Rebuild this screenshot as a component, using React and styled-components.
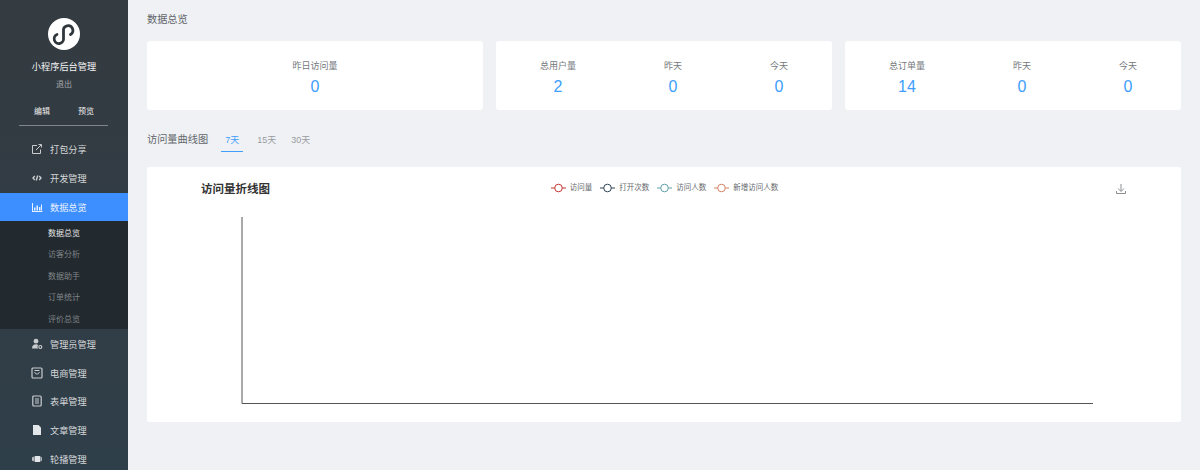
import React from 'react';
import styled, { createGlobalStyle } from 'styled-components';

const GlobalStyle = createGlobalStyle`
  html, body {
    margin: 0;
    padding: 0;
    height: 100%;
    overflow: hidden;
    background: #eff1f5;
    font-family: "Liberation Sans", "Noto Sans CJK SC", sans-serif;
  }
`;

const Page = styled.div`
  display: flex;
  width: 1200px;
  height: 470px;
  overflow: hidden;
`;

const Sidebar = styled.aside`
  flex: 0 0 128px;
  height: 470px;
  overflow: hidden;
  background: linear-gradient(180deg, #343b41 0%, #323c44 50%, #2f3f4a 100%);
  color: #fff;
`;

const Brand = styled.div`
  display: flex;
  flex-direction: column;
  align-items: center;
  padding-top: 18px;
`;

const Logo = styled.div`
  width: 32px;
  height: 32px;
  border-radius: 50%;
  background: #fff;
  display: flex;
  align-items: center;
  justify-content: center;
`;

const AppName = styled.div`
  margin-top: 10px;
  font-size: 9.2px;
  line-height: 14px;
  color: #f2f3f4;
`;

const Logout = styled.div`
  margin-top: 5px;
  font-size: 8px;
  line-height: 12px;
  color: #a5a9ad;
`;

const BrandActions = styled.div`
  display: flex;
  justify-content: space-between;
  width: 89px;
  box-sizing: border-box;
  padding: 0 14px 7px 15px;
  margin: 15px 1px 0 0;
  border-bottom: 1px solid #82868a;
  font-size: 8px;
  line-height: 12px;
  color: #eceded;
`;

const Menu = styled.nav`
  margin-top: 9px;
`;

const MenuItem = styled.div`
  display: flex;
  align-items: center;
  height: 28.8px;
  padding-left: 31px;
  box-sizing: border-box;
  font-size: 9.2px;
  color: ${p => (p.$active ? '#e8f1ff' : '#d4d6d8')};
  background: ${p => (p.$active ? '#3d8efe' : 'transparent')};
`;

const IconSlot = styled.span`
  flex: 0 0 19px;
  display: flex;
  align-items: center;
  color: ${p => (p.$active ? '#e8f1ff' : '#c9ccce')};
`;

const SubMenu = styled.div`
  background: #232a2f;
  height: 108px;
`;

const SubItem = styled.div`
  display: flex;
  align-items: center;
  height: 21.6px;
  padding-left: 48px;
  font-size: 8px;
  color: ${p => (p.$active ? '#e4e5e6' : '#7f8588')};
`;

const Main = styled.main`
  flex: 1;
  padding: 12px 19px 0;
  min-width: 0;
`;

const PageTitle = styled.div`
  font-size: 10.2px;
  line-height: 15px;
  color: #62666a;
`;

const StatRow = styled.div`
  display: grid;
  grid-template-columns: repeat(3, 336px);
  column-gap: 13px;
  margin-top: 14px;
`;

const StatCard = styled.div`
  height: 69px;
  background: #fff;
  border-radius: 3px;
  display: flex;
  align-items: center;
  justify-content: space-around;
`;

const Stat = styled.div`
  display: flex;
  flex-direction: column;
  align-items: center;
  padding-top: 4px;
`;

const StatLabel = styled.div`
  font-size: 9px;
  line-height: 13px;
  color: #74787c;
`;

const StatValue = styled.div`
  margin-top: 5px;
  font-size: 16px;
  line-height: 17px;
  color: #409eff;
`;

const TabBar = styled.div`
  display: flex;
  align-items: flex-end;
  height: 42px;
`;

const TabTitle = styled.div`
  height: 22px;
  line-height: 20px;
  font-size: 10.2px;
  color: #62666a;
  margin-right: 13px;
`;

const Tab = styled.div`
  height: 22px;
  line-height: 20px;
  padding: 0 ${p => (p.$active ? '4px' : '5px')};
  margin-right: ${p => (p.$active ? '9px' : '5px')};
  font-size: 9px;
  box-sizing: border-box;
  color: ${p => (p.$active ? '#409eff' : '#999c9f')};
  border-bottom: 1px solid ${p => (p.$active ? '#409eff' : 'transparent')};
`;

const ChartCard = styled.section`
  margin-top: 15px;
  height: 255px;
  background: #fff;
  border-radius: 2px;
  display: flex;
  flex-direction: column;
`;

const ChartHead = styled.div`
  position: relative;
  display: flex;
  align-items: center;
  justify-content: center;
  height: 42px;
`;

const ChartTitle = styled.div`
  position: absolute;
  left: 54px;
  top: 14px;
  font-size: 11.5px;
  line-height: 16px;
  font-weight: 700;
  color: #333;
`;

const Legend = styled.div`
  display: flex;
  gap: 8px;
  margin-top: -1px;
  margin-left: 1px;
  font-size: 7.5px;
  line-height: 12px;
  color: #666a6e;
`;

const LegendEntry = styled.div`
  display: flex;
  align-items: center;
  gap: 4px;
`;

const DownloadBtn = styled.div`
  position: absolute;
  right: 54px;
  top: 14px;
  width: 12px;
  height: 12px;
  color: #8a8d90;
`;

const Plot = styled.div`
  flex: 1;
  padding: 8px 0 0 94px;
`;

const nav = [
  ['打包分享', 'share'],
  ['开发管理', 'code'],
  ['数据总览', 'chart', true],
];

const navAfter = [
  ['管理员管理', 'admin'],
  ['电商管理', 'shop'],
  ['表单管理', 'form'],
  ['文章管理', 'doc'],
  ['轮播管理', 'slide'],
];

const subNav = ['数据总览', '访客分析', '数据助手', '订单统计', '评价总览'];

const stats = [
  [['昨日访问量', 0]],
  [['总用户量', 2], ['昨天', 0], ['今天', 0]],
  [['总订单量', 14], ['昨天', 0], ['今天', 0]],
];

const legend = [
  ['访问量', '#c23531'],
  ['打开次数', '#2f4554'],
  ['访问人数', '#61a0a8'],
  ['新增访问人数', '#d48265'],
];

function MenuIcon({ name }) {
  const paths = {
    share: (
      <g fill="none" stroke="currentColor" strokeWidth="1">
        <path d="M6 2.500H1.500v8h8V6.500" />
        <path d="M5 7l5-5M7.500 1.500h3v3" />
      </g>
    ),
    code: (
      <g fill="none" stroke="currentColor" strokeWidth="1.400">
        <path d="M3.800 4L2 6l1.800 2M8.200 4L10 6 8.200 8M6.700 3.500L5.300 8.500" />
      </g>
    ),
    chart: (
      <g fill="currentColor">
        <path d="M1 2h1v8h9.500v1H1z" />
        <path d="M3 6.500h1.500v3H3zM5.500 4.500H7v5H5.500zM8 6h1.500v3.500H8zM10 3.500h1v6h-1z" />
      </g>
    ),
    admin: (
      <g fill="currentColor">
        <circle cx="5" cy="3.200" r="2.400" />
        <path d="M1 10.500c0-3 1.800-4.200 4-4.200 1 0 1.600.2 2.200.6-.8.9-.9 2.400 0 3.600z" />
        <circle cx="9.300" cy="9" r="1.500" fill="none" stroke="currentColor" strokeWidth="1.200" />
      </g>
    ),
    shop: (
      <g>
        <rect x="1" y="1" width="10" height="10" rx="1" fill="none" stroke="currentColor" strokeWidth="1.200" />
        <path d="M3.500 3.500h5M3.700 5c.4 2.700 4.200 2.700 4.600 0" fill="none" stroke="currentColor" strokeWidth="1" />
      </g>
    ),
    form: (
      <g>
        <rect x="1.800" y="1" width="8.400" height="10" rx="1" fill="none" stroke="currentColor" strokeWidth="1.200" />
        <path d="M4 4h4M4 6h4M4 8h4" fill="none" stroke="currentColor" strokeWidth="1" />
      </g>
    ),
    doc: <path fill="#e4e7ea" d="M2 1h5.500L10 3.500V11H2z" />,
    slide: (
      <g fill="#e4e7ea">
        <rect x="3.500" y="3" width="6" height="6" rx="1" />
        <path d="M1.200 4.500l1.500-1v5l-1.500-1zM11 4.500l-.7-.8v4.600l.7-.8z" />
      </g>
    ),
  };
  return (
    <svg width="12" height="12" viewBox="0 0 12 12">
      {paths[name]}
    </svg>
  );
}

function NavRow({ label, icon, active }) {
  return (
    <MenuItem $active={active}>
      <IconSlot $active={active}>
        <MenuIcon name={icon} />
      </IconSlot>
      {label}
    </MenuItem>
  );
}

export default function App() {
  return (
    <Page>
      <GlobalStyle />
      <Sidebar>
        <Brand>
          <Logo>
            <svg width="32" height="32" viewBox="0 0 32 32">
              <path
                d="M9 16.500A4.700 4.700 0 1 0 15.500 20V13A4.700 4.700 0 1 1 22.500 16.500"
                fill="none"
                stroke="#2f363c"
                strokeWidth="2.800"
                strokeLinecap="round"
              />
            </svg>
          </Logo>
          <AppName>小程序后台管理</AppName>
          <Logout>退出</Logout>
          <BrandActions>
            <span>编辑</span>
            <span>预览</span>
          </BrandActions>
        </Brand>
        <Menu>
          {nav.map(([label, icon, active]) => (
            <NavRow key={label} label={label} icon={icon} active={active} />
          ))}
          <SubMenu>
            {subNav.map((label, i) => (
              <SubItem key={label} $active={i === 0}>
                {label}
              </SubItem>
            ))}
          </SubMenu>
          {navAfter.map(([label, icon]) => (
            <NavRow key={label} label={label} icon={icon} />
          ))}
        </Menu>
      </Sidebar>
      <Main>
        <PageTitle>数据总览</PageTitle>
        <StatRow>
          {stats.map((card, i) => (
            <StatCard key={i}>
              {card.map(([label, value]) => (
                <Stat key={label}>
                  <StatLabel>{label}</StatLabel>
                  <StatValue>{value}</StatValue>
                </Stat>
              ))}
            </StatCard>
          ))}
        </StatRow>
        <TabBar>
          <TabTitle>访问量曲线图</TabTitle>
          <Tab $active>7天</Tab>
          <Tab>15天</Tab>
          <Tab>30天</Tab>
        </TabBar>
        <ChartCard>
          <ChartHead>
            <ChartTitle>访问量折线图</ChartTitle>
            <Legend>
              {legend.map(([label, color]) => (
                <LegendEntry key={label}>
                  <svg width="15" height="10" viewBox="0 0 15 10">
                    <path d="M0 5h15" stroke={color} strokeWidth="1" />
                    <circle cx="7.500" cy="5" r="3.800" fill="#fff" stroke={color} strokeWidth="1" />
                  </svg>
                  {label}
                </LegendEntry>
              ))}
            </Legend>
            <DownloadBtn>
              <svg width="12" height="12" viewBox="0 0 12 12" fill="none" stroke="currentColor" strokeWidth="1">
                <path d="M6 1v7M3 5.500L6 8.500l3-3M1.500 8v2.500h9V8" />
              </svg>
            </DownloadBtn>
          </ChartHead>
          <Plot>
            <svg width="853" height="190" viewBox="0 0 853 190">
              <path d="M1 0V186.500H852" fill="none" stroke="#555" strokeWidth="1" />
            </svg>
          </Plot>
        </ChartCard>
      </Main>
    </Page>
  );
}
